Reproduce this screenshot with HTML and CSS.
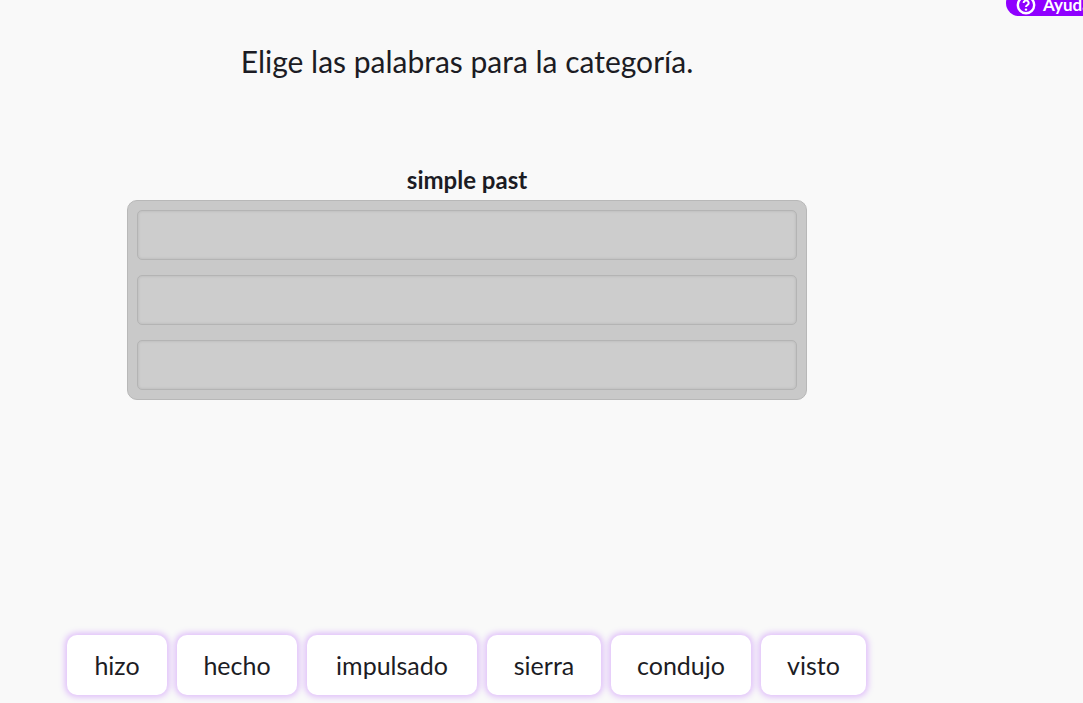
FILE: index.html
```html
<!DOCTYPE html>
<html lang="es">
<head>
    <meta charset="UTF-8">
    <title>Elige las palabras para la categoría</title>
    <link rel="stylesheet" href="styles.css">
</head>
<body>
    <a class="help" href="#">
        <svg class="help-icon" viewBox="0 0 20 20" width="20" height="20">
            <circle cx="10" cy="10" r="8.2" fill="none" stroke="#fff" stroke-width="2.4"/>
            <path d="M7.6 8a2.5 2.4 0 1 1 3.7 2.1c-.9.5-1.3 1-1.3 1.9" fill="none" stroke="#fff" stroke-width="2"/>
            <circle cx="10" cy="14.6" r="1.2" fill="#fff"/>
        </svg>
        <span>Ayuda</span>
    </a>

    <div class="game">
        <h1 class="prompt">Elige las palabras para la categoría.</h1>

        <h2 class="category-name">simple past</h2>
        <div class="category">
            <div class="slot"></div>
            <div class="slot"></div>
            <div class="slot"></div>
        </div>
    </div>

    <!-- word bank -->
    <div class="words">
        <div class="word">hizo</div>
        <div class="word">hecho</div>
        <div class="word">impulsado</div>
        <div class="word">sierra</div>
        <div class="word">condujo</div>
        <div class="word">visto</div>
    </div>
</body>
</html>
```

FILE: styles.css
```css
html, body {
    height: 100%;
}

body {
    margin: 0;
    background-color: #f9f9f9;
    color: #1c1c24;
    font-family: 'Lato', 'Open Sans', sans-serif;
    overflow: hidden;
    display: flex;
    flex-direction: column;
}

.help {
    position: absolute;
    top: -10px;
    left: 1006px;
    width: 110px;
    height: 26px;
    padding-left: 10px;
    box-sizing: border-box;
    display: flex;
    align-items: center;
    gap: 7px;
    background-color: #8f00ff;
    border-radius: 14px;
    color: #fff;
    font-size: 17px;
    font-weight: 700;
    text-decoration: none;
    padding-top: 3px;
}

.help-icon {
    flex: none;
}

.game {
    width: 680px;
    margin-left: 127px;
    flex: 1;
}

.prompt {
    margin: 41px 0 0;
    font-size: 30px;
    line-height: 40px;
    font-weight: 400;
    text-align: center;
}

.category-name {
    margin: 79px 0 0;
    font-size: 24px;
    line-height: 40px;
    font-weight: 700;
    text-align: center;
    height: 40px;
    margin-bottom: 0;
    transform: none;
}

.category {
    height: 200px;
    box-sizing: border-box;
    padding: 9px;
    display: flex;
    flex-direction: column;
    gap: 15px;
    background-color: #c9c9c9;
    border: 1px solid #b8b8b8;
    border-radius: 10px;
}

.slot {
    height: 50px;
    box-sizing: border-box;
    background-color: #cdcdcd;
    border: 1px solid #b4b4b4;
    border-radius: 5px;
    box-shadow: inset 0 0 3px rgba(0, 0, 0, 0.12);
}

.words {
    display: grid;
    grid-template-columns: 100px 120px 170px 114px 140px 105px;
    gap: 10px;
    margin: 0 0 8px 67px;
}

.word {
    height: 60px;
    line-height: 60px;
    text-align: center;
    background-color: #fff;
    border-radius: 10px;
    font-size: 25px;
    box-shadow: 0 0 6px 2px rgba(143, 0, 255, 0.25);
}
```
